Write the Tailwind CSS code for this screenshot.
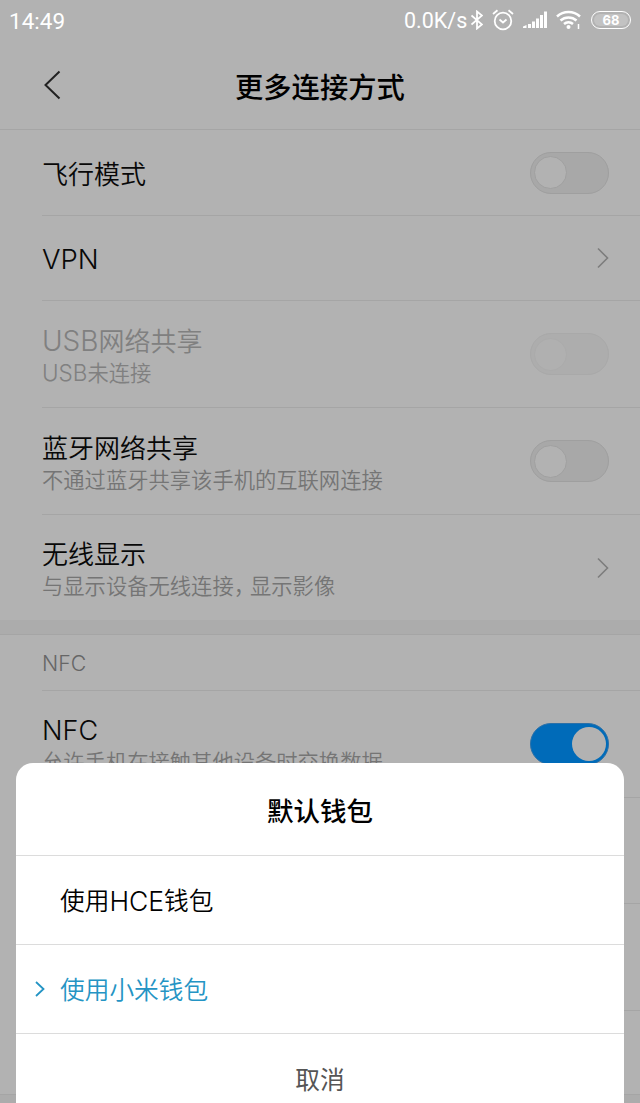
<!DOCTYPE html>
<html lang="zh-CN">
<head>
    <meta charset="UTF-8">
    <meta name="viewport" content="width=device-width, initial-scale=1.0">
    <title>更多连接方式</title>
    <script src="https://cdn.jsdelivr.net/npm/@tailwindcss/browser@4"></script>
</head>
<body class="bg-[#b2b2b2] font-['Inter','Noto_Sans_CJK_SC',sans-serif] text-[26px] font-[350] text-[#080808]">
    <div class="relative h-[1103px] w-[640px] overflow-hidden">
        <!-- Status bar -->
        <div class="flex h-10 items-center justify-between px-[9px] text-[22px] leading-none text-white">
            <span class="pt-0.5 font-['Roboto'] text-[22.5px] font-normal">14:49</span>
            <div class="flex items-center">
                <span class="w-[63px] pt-0.5 font-['Roboto'] text-[21.5px] font-normal whitespace-nowrap">0.0K/s</span>
                <svg class="ml-1 h-5 w-3" viewBox="0 0 12 20" fill="none" stroke="currentColor" stroke-width="1.8"><path d="M0.5 5.5 11 14.5 6 18.5V1.500l5 4L0.5 14.5"/></svg>
                <svg class="ml-[9px] h-[22px] w-[22px]" viewBox="0 0 22 22" fill="none" stroke="currentColor" stroke-width="1.8"><circle cx="11" cy="12" r="8.300"/><path d="M7.500 10.500 11 13.500l3.500-3M1 5 5.500 1.300M21 5 16.500 1.300"/></svg>
                <svg class="ml-[9px] h-5 w-6" viewBox="0 0 24 20" fill="currentColor"><path d="M0 18v-1.500L3.500 15v3zM5 14h3v4H5zM9 11.500h3V18H9zM13 8.500h3V18h-3zM17 5h3v13h-3zM21 1.500h3V18h-3z"/></svg>
                <svg class="ml-[9px] h-5 w-[26px]" viewBox="0 0 26 20" fill="none" stroke="currentColor" stroke-width="2.5"><path d="M1 6.500a17 17 0 0 1 23 0M4.500 10.500a12 12 0 0 1 16 0M8 14a7 7 0 0 1 9 0"/><circle cx="12.500" cy="17" r="2" fill="currentColor" stroke="none"/><path stroke-width="1.500" d="M22.500 14v5"/></svg>
                <span class="ml-[9px] flex h-[18px] w-10 items-center justify-center rounded-full border-[1.5px] border-white p-0.5">
                    <span class="flex h-full w-full items-center justify-center rounded-full bg-[#c2c2c2] text-[13px] font-bold">68</span>
                </span>
            </div>
        </div>

        <!-- Title bar -->
        <div class="flex h-[90px] items-center border-b border-[#a5a5a5] pl-[43px]">
            <svg class="h-[30px] w-[18px]" viewBox="0 0 18 30" fill="none" stroke="#222" stroke-width="2"><path d="M16.500 1.500 2.500 15l14 13.500"/></svg>
            <h1 class="ml-[174px] pt-[7px] text-[28.3px] font-medium text-black">更多连接方式</h1>
        </div>

        <!-- Settings list -->
        <div class="pl-[42px]">
            <div class="flex h-[86px] items-center justify-between border-b border-[#a5a5a5] pr-[31px]">
                <span class="pt-1">飞行模式</span>
                <span class="flex h-[42px] w-[79px] items-center rounded-full border border-[#9f9f9f] bg-[#a8a8a8] pl-[3px]"><span class="size-[33px] rounded-full border border-[#a0a0a0] bg-[#b2b2b2]"></span></span>
            </div>
            <div class="flex h-[85px] items-center justify-between border-b border-[#a5a5a5] pr-[31px]">
                <span class="pt-1 text-[27.5px] font-light">VPN</span>
                <svg class="h-[22px] w-3" viewBox="0 0 12 22" fill="none" stroke="#7d7d7d" stroke-width="1.600"><path d="M1 1.500 10.500 11 1 20.500"/></svg>
            </div>
            <div class="flex h-[107px] items-center justify-between border-b border-[#a5a5a5] pr-[31px] text-[#808080]">
                <div class="pt-[5px]">
                    <p class="leading-[33px]"><span class="text-[28px] font-light">USB</span>网络共享</p>
                    <p class="text-[21.3px] leading-[30px]"><span class="text-[22.5px] font-light">USB</span>未连接</p>
                </div>
                <span class="flex h-[42px] w-[79px] items-center rounded-full border border-[#a9a9a9] bg-[#adadad] pl-[3px]"><span class="size-[33px] rounded-full border border-[#ababab] bg-[#b0b0b0]"></span></span>
            </div>
            <div class="flex h-[107px] items-center justify-between border-b border-[#a5a5a5] pr-[31px]">
                <div class="pt-[5px]">
                    <p class="leading-[33px]">蓝牙网络共享</p>
                    <p class="text-[21.3px] leading-[30px] text-[#757575]">不通过蓝牙共享该手机的互联网连接</p>
                </div>
                <span class="flex h-[42px] w-[79px] items-center rounded-full border border-[#9f9f9f] bg-[#a8a8a8] pl-[3px]"><span class="size-[33px] rounded-full border border-[#a0a0a0] bg-[#b2b2b2]"></span></span>
            </div>
            <div class="flex h-[105px] items-center justify-between pr-[31px]">
                <div class="pt-[4px]">
                    <p class="leading-[33px]">无线显示</p>
                    <p class="text-[21.3px] leading-[30px] text-[#757575]">与显示设备无线连接<span class="tracking-[-5px]">，</span>显示影像</p>
                </div>
                <svg class="h-[22px] w-3" viewBox="0 0 12 22" fill="none" stroke="#7d7d7d" stroke-width="1.600"><path d="M1 1.500 10.500 11 1 20.500"/></svg>
            </div>
        </div>
        <div class="h-[15px] border-b border-[#a5a5a5] bg-[#acacac]"></div>
        <div class="pl-[42px]">
            <div class="flex h-[56px] items-center border-b border-[#a5a5a5] pt-0.5 text-[21.3px] font-light text-[#666]">NFC</div>
            <div class="flex h-[107px] items-center justify-between border-b border-[#a5a5a5] pr-[31px]">
                <div class="pt-0.5">
                    <p class="text-[27px] leading-[33px] font-light">NFC</p>
                    <p class="text-[21.3px] leading-[30px] text-[#757575]">允许手机在接触其他设备时交换数据</p>
                </div>
                <span class="flex h-[42px] w-[79px] items-center justify-end rounded-full border border-[#2b70a8] bg-[#006bb9] pr-[2px]"><span class="size-[34px] rounded-full bg-[#b2b2b2]"></span></span>
            </div>
            <div class="h-[106px] border-b border-[#a5a5a5]"></div>
            <div class="h-[107px] border-b border-[#a5a5a5]"></div>
        </div>
        <div class="h-[84px] border-b border-[#a5a5a5]"></div>
        <div class="h-[8px] bg-[#acacac]"></div>

        <!-- Bottom sheet -->
        <div class="absolute left-4 top-[763px] h-[340px] w-[608px] overflow-hidden rounded-t-[17px] bg-white">
            <h2 class="flex h-[93px] items-center justify-center border-b border-[#dcdcdc] pt-[5px] text-[26.500px] font-medium text-black">默认钱包</h2>
            <div class="flex h-[89px] items-center border-b border-[#dcdcdc] pt-1 pl-[44px] text-[24.700px] text-black">使用<span class="text-[26.500px] font-light">HCE</span>钱包</div>
            <div class="flex h-[89px] items-center border-b border-[#dcdcdc] pl-[19px] text-[24.700px] text-[#2494c4]">
                <svg class="mr-[15px] h-4 w-[10px]" viewBox="0 0 10 16" fill="none" stroke="currentColor" stroke-width="1.800"><path d="M1 1 8.500 8 1 15"/></svg>
                <span class="pt-1">使用小米钱包</span>
            </div>
            <div class="flex h-[90px] items-center justify-center pt-[3px] text-[24.700px] font-normal text-[#555]">取消</div>
        </div>
    </div>
</body>
</html>
